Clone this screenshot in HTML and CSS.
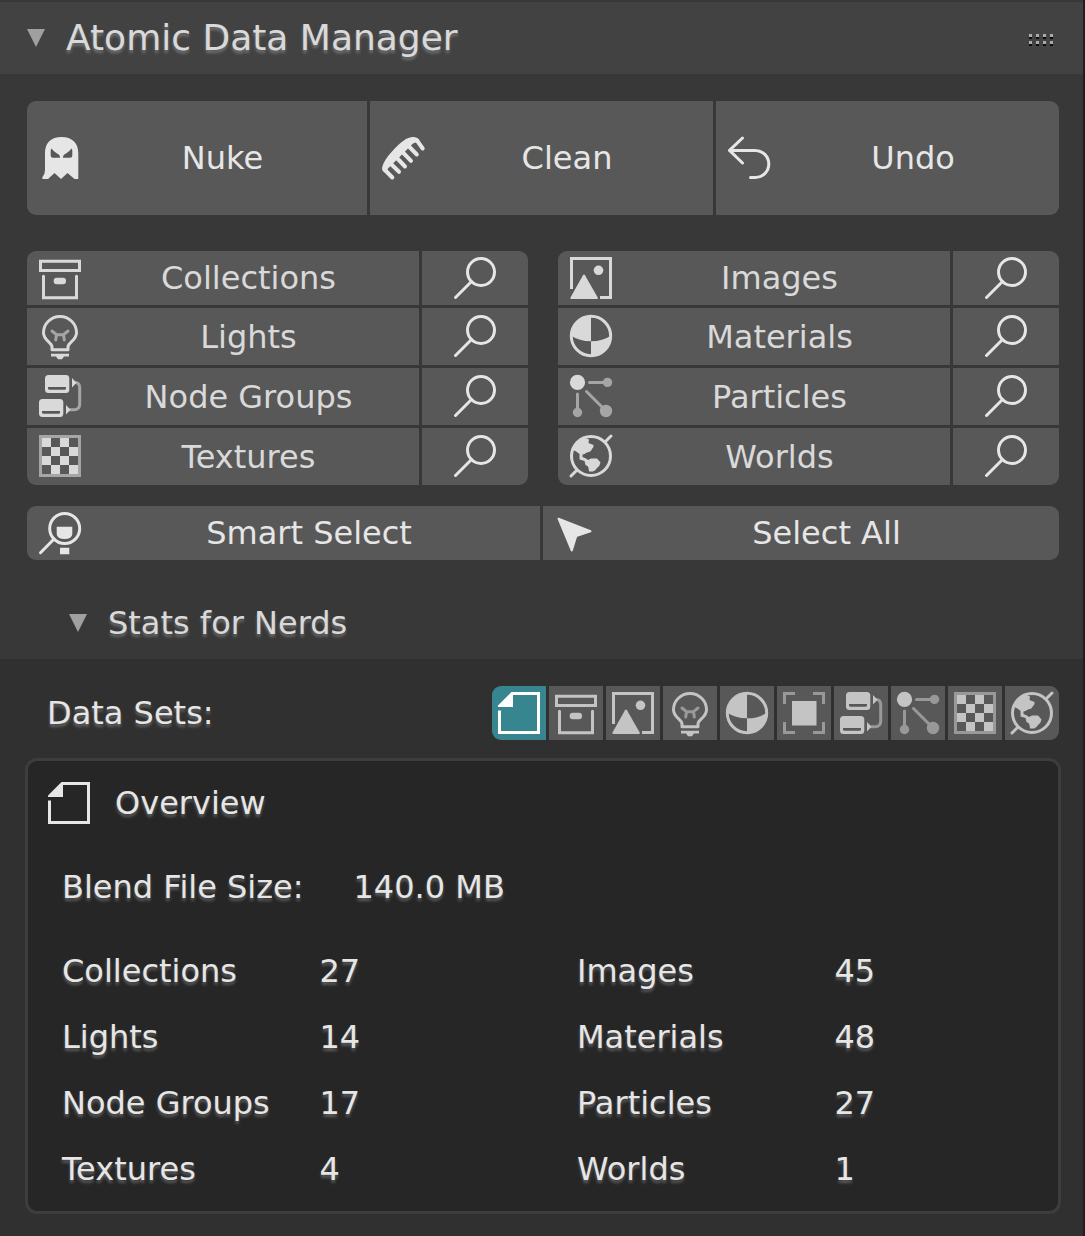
FILE: index.html
```html
<!DOCTYPE html>
<html lang="en">
<head>
<meta charset="utf-8">
<title>Atomic Data Manager</title>
<link rel="stylesheet" href="styles.css">
</head>
<body>
<svg class="sprite" aria-hidden="true">
  <symbol id="ghost" viewBox="0 0 44 44"><path fill="currentColor" fill-rule="evenodd" d="M7 17C7 7 13 1 23.500 1S40.300 7 40.300 17V43H36.500L29.500 37L23 43L16.500 37L10 43H4.500Q4 42 4.500 41Q7 38 7 34ZM13.500 12.500Q12.700 13 12.700 15V19.500Q12.700 21.700 15 21.700H22Q22 18.500 19 17.500Q15.500 15.500 13.500 12.500ZM33.500 12.500Q31.500 15.500 28 17.500Q25 18.500 25 21.700H32Q34.300 21.700 34.300 19.500V15Q34.300 13 33.500 12.500Z"/></symbol>
  <symbol id="comb" viewBox="0 0 44 44"><path fill="currentColor" d="M1.200 31C2.500 26 6 21 11 15.500C17 9 23 2.500 30 1.200C34 .5 36.500 1.500 38.500 4L36 6L32 7.500L7 32.500L5 37C2 36 .700 34 1.200 31Z"/><path class="line tooth" d="M3.500 33.500L11.300 41.500M9 27L18 35.800M15 21L24 30.500M21 15.500L30 24.800M27.500 10L35.800 18.500M36 4.500L41.700 12.500"/></symbol>
  <symbol id="undo" viewBox="0 0 44 44"><path class="line" d="M15.500 2L2.500 14.400L15.500 27M2.500 14.400H28.200A13.600 13.600 0 0 1 28.200 41.600H23.500"/></symbol>
  <symbol id="collection" viewBox="0 0 44 44"><path class="line square" d="M2.500 5.200H41.500V14.500H2.500ZM5.500 20.200V41.700H38.500V20.200"/><rect fill="currentColor" x="15.700" y="21.700" width="12.300" height="6.600" rx="3"/></symbol>
  <symbol id="light" viewBox="0 0 44 44"><path class="line" d="M14 35.700V32.500C13 28 5.500 26 5.500 18.700A16.500 16.200 0 0 1 38.500 18.700C38.500 26 31 28 30 32.500V35.700Z"/><path fill="currentColor" d="M13 39.700H31V42.500H26L24 45.300H20L18 42.500H13Z"/><path class="thin" d="M14 17L18.500 20.700H25.500L30 17M18.500 20.700L17.700 26M25.500 20.700L26.300 26"/></symbol>
  <symbol id="nodes" viewBox="0 0 44 44"><path fill="currentColor" fill-rule="evenodd" d="M10.500 1H28Q31.300 1 31.300 4.500V15.500Q31.300 19 28 19H10.500Q7 19 7 15.500V4.500Q7 1 10.500 1ZM10 13V14.500Q10 15.700 11.500 15.700H26.500Q28 15.700 28 14.500V13ZM4.500 25H22Q25.300 25 25.300 28.500V39.500Q25.300 43 22 43H4.500Q1 43 1 39.500V28.500Q1 25 4.500 25ZM4 37V38.500Q4 39.700 5.500 39.700H20.500Q22 39.700 22 38.500V37ZM34 4L38.500 8.700L34 13.500ZM28 31L32.500 35.700L28 40.500Z"/><path class="thin" d="M37 8.500Q41.700 8.500 41.700 14V30Q41.700 35.700 36 35.700H32"/></symbol>
  <symbol id="texture" viewBox="0 0 44 44"><rect class="dim" x="2.500" y="2.500" width="39" height="39"/><path fill="currentColor" d="M4 4h9v9H4zM22 4h9v9h-9zM13 13h9v9h-9zM31 13h9v9h-9zM4 22h9v9H4zM22 22h9v9h-9zM13 31h9v9h-9zM31 31h9v9h-9z"/></symbol>
  <symbol id="image" viewBox="0 0 44 44"><path class="line square flat" d="M2.500 33V2.500H41.500V41.500H31"/><path fill="currentColor" d="M14 19.300Q15 17.700 16 19.300L28.700 41.500Q29 43 28 43H2.500Q1 43 1.500 41.500Z"/><circle fill="currentColor" cx="29.500" cy="14.300" r="4.800"/></symbol>
  <symbol id="material" viewBox="0 0 44 44"><circle class="line" cx="22" cy="22" r="19.700"/><path fill="currentColor" d="M22 2A20 20 0 0 0 2 21.500Q10 27.300 22 27.300ZM22 27.300Q34 27.300 42 21.500A20 20 0 0 1 22 42Z"/></symbol>
  <symbol id="particles" viewBox="0 0 44 44"><circle fill="currentColor" cx="8.500" cy="8.400" r="7.600"/><g class="faded"><path class="line" d="M20.500 8.400H36M8.500 20V36M17.500 17.500L35 35"/><circle fill="currentColor" cx="38.500" cy="8.400" r="4.700"/><circle fill="currentColor" cx="8.500" cy="38.500" r="4.700"/><circle fill="currentColor" cx="37" cy="37" r="6.200"/></g></symbol>
  <symbol id="world" viewBox="0 0 44 44"><circle class="line" cx="22" cy="22" r="19.500"/><path class="line" d="M36.500 7.500L42 2M2 42L7.500 36.500"/><path fill="currentColor" d="M4 15Q7 6 14.500 3L20 5.500L19.500 9L24.500 11Q25 13.500 23 15Q22 18 18 18.500L15.500 20L13.500 20.500L13.500 23L17 24.500L19 26L22 24.500H28L31.500 28.500Q31 32 28 34Q26.500 37 24 37.500H20L19.500 34Q19.500 32 16.500 31L15.500 27L10.500 25.500V20Q7 17 4 16Z"/></symbol>
  <symbol id="search" viewBox="0 0 44 44"><circle class="line" cx="28" cy="16" r="13.500"/><path class="line" d="M18.500 25.500L2.500 41.500"/></symbol>
  <symbol id="smart" viewBox="0 0 44 44"><circle class="line" cx="26.700" cy="17.500" r="15"/><path class="line" d="M16 28L2.500 41.700"/><path fill="currentColor" d="M18.700 15.700H34.300V23Q34 28 26.500 28T18.700 23ZM22 36.700H31.300V43.300H22Z"/></symbol>
  <symbol id="cursor" viewBox="0 0 44 44"><path class="solid" d="M4.500 7.700L36.500 20.300L22.300 25L17.800 39.500Z"/></symbol>
  <symbol id="file" viewBox="0 0 44 44"><path class="line square flat" d="M2.500 19.500V41.500H41.500V2.500H15"/><path fill="currentColor" d="M1 16V14.500L14.500 1H16V16Z"/></symbol>
  <symbol id="object" viewBox="0 0 44 44"><rect fill="currentColor" x="10" y="10" width="24.500" height="24.500"/><path class="dim" d="M2.500 13V2.500H13M31 2.500H41.500V13M41.500 31V41.500H31M13 41.500H2.500V31"/></symbol>
</svg>

<main class="panel">
  <header class="panel-header">
    <button class="toggle title" type="button" aria-expanded="true"><span class="arrow"></span>Atomic Data Manager</button>
    <svg class="grip" viewBox="0 0 24 12" aria-hidden="true"><path fill="#aaa" d="M0 0h3v3H0zM7 0h3v3H7zM14 0h3v3h-3zM21 0h3v3h-3zM0 7h3v3H0zM7 7h3v3H7zM14 7h3v3h-3zM21 7h3v3h-3z"/><path fill="#0c0c0c" d="M0 3h3v2H0zM7 3h3v2H7zM14 3h3v2h-3zM21 3h3v2h-3zM0 10h3v2H0zM7 10h3v2H7zM14 10h3v2h-3zM21 10h3v2h-3z"/></svg>
  </header>

  <div class="panel-body">
    <div class="group actions">
      <button class="btn" type="button"><svg class="icon"><use href="#ghost"/></svg><span>Nuke</span></button>
      <button class="btn" type="button"><svg class="icon"><use href="#comb"/></svg><span>Clean</span></button>
      <button class="btn" type="button"><svg class="icon"><use href="#undo"/></svg><span>Undo</span></button>
    </div>

    <div class="categories">
      <div class="group list">
        <button class="btn soft" type="button"><svg class="icon"><use href="#collection"/></svg><span>Collections</span></button>
        <button class="btn inspect" type="button" aria-label="Inspect collections"><svg class="icon"><use href="#search"/></svg></button>
        <button class="btn soft" type="button"><svg class="icon"><use href="#light"/></svg><span>Lights</span></button>
        <button class="btn inspect" type="button" aria-label="Inspect lights"><svg class="icon"><use href="#search"/></svg></button>
        <button class="btn soft" type="button"><svg class="icon"><use href="#nodes"/></svg><span>Node Groups</span></button>
        <button class="btn inspect" type="button" aria-label="Inspect node groups"><svg class="icon"><use href="#search"/></svg></button>
        <button class="btn soft" type="button"><svg class="icon"><use href="#texture"/></svg><span>Textures</span></button>
        <button class="btn inspect" type="button" aria-label="Inspect textures"><svg class="icon"><use href="#search"/></svg></button>
      </div>
      <div class="group list">
        <button class="btn soft" type="button"><svg class="icon"><use href="#image"/></svg><span>Images</span></button>
        <button class="btn inspect" type="button" aria-label="Inspect images"><svg class="icon"><use href="#search"/></svg></button>
        <button class="btn soft" type="button"><svg class="icon"><use href="#material"/></svg><span>Materials</span></button>
        <button class="btn inspect" type="button" aria-label="Inspect materials"><svg class="icon"><use href="#search"/></svg></button>
        <button class="btn soft" type="button"><svg class="icon"><use href="#particles"/></svg><span>Particles</span></button>
        <button class="btn inspect" type="button" aria-label="Inspect particles"><svg class="icon"><use href="#search"/></svg></button>
        <button class="btn soft" type="button"><svg class="icon"><use href="#world"/></svg><span>Worlds</span></button>
        <button class="btn inspect" type="button" aria-label="Inspect worlds"><svg class="icon"><use href="#search"/></svg></button>
      </div>
    </div>

    <div class="group select">
      <button class="btn" type="button"><svg class="icon"><use href="#smart"/></svg><span>Smart Select</span></button>
      <button class="btn" type="button"><svg class="icon"><use href="#cursor"/></svg><span>Select All</span></button>
    </div>
  </div>

  <section class="stats">
    <button class="toggle subtitle" type="button" aria-expanded="true"><span class="arrow"></span>Stats for Nerds</button>

    <div class="stats-body">
      <div class="datasets" role="radiogroup" aria-labelledby="datasets-label">
        <span class="label" id="datasets-label">Data Sets:</span>
        <div class="group tabs">
          <label class="tab"><input type="radio" name="set" aria-label="Overview" checked><svg class="icon"><use href="#file"/></svg></label>
          <label class="tab"><input type="radio" name="set" aria-label="Collections"><svg class="icon"><use href="#collection"/></svg></label>
          <label class="tab"><input type="radio" name="set" aria-label="Images"><svg class="icon"><use href="#image"/></svg></label>
          <label class="tab"><input type="radio" name="set" aria-label="Lights"><svg class="icon"><use href="#light"/></svg></label>
          <label class="tab"><input type="radio" name="set" aria-label="Materials"><svg class="icon"><use href="#material"/></svg></label>
          <label class="tab"><input type="radio" name="set" aria-label="Objects"><svg class="icon"><use href="#object"/></svg></label>
          <label class="tab"><input type="radio" name="set" aria-label="Node Groups"><svg class="icon"><use href="#nodes"/></svg></label>
          <label class="tab"><input type="radio" name="set" aria-label="Particles"><svg class="icon"><use href="#particles"/></svg></label>
          <label class="tab"><input type="radio" name="set" aria-label="Textures"><svg class="icon"><use href="#texture"/></svg></label>
          <label class="tab"><input type="radio" name="set" aria-label="Worlds"><svg class="icon"><use href="#world"/></svg></label>
        </div>
      </div>

      <div class="box">
        <h2 class="box-title"><svg class="icon"><use href="#file"/></svg>Overview</h2>
        <dl class="filesize"><dt>Blend File Size:</dt><dd>140.0 MB</dd></dl>
        <dl class="counts">
          <dt>Collections</dt><dd>27</dd><dt>Images</dt><dd>45</dd>
          <dt>Lights</dt><dd>14</dd><dt>Materials</dt><dd>48</dd>
          <dt>Node Groups</dt><dd>17</dd><dt>Particles</dt><dd>27</dd>
          <dt>Textures</dt><dd>4</dd><dt>Worlds</dt><dd>1</dd>
        </dl>
      </div>
    </div>
  </section>
</main>
</body>
</html>
```

FILE: styles.css
```css
* {
  box-sizing: border-box;
}

body {
  margin: 0;
  background: #303030;
  color: #e6e6e6;
  font: 32px/66px "DejaVu Sans", sans-serif;
}

.sprite {
  position: absolute;
  width: 0;
  height: 0;
}

.panel {
  min-height: 100vh;
  padding-top: 2px;
  background: #383838;
  border-right: 2px solid #1f1f1f;
  display: flex;
  flex-direction: column;
}

/* Headers */
.panel-header {
  display: flex;
  align-items: center;
  justify-content: space-between;
  height: 72px;
  padding-right: 30px;
  background: #424242;
}

.toggle {
  display: flex;
  align-items: center;
  gap: 21px;
  height: 72px;
  padding: 0 0 0 27px;
  border: 0;
  background: none;
  color: #d9d9d9;
  font: inherit;
  text-shadow: 0 3px 3px rgba(255, 255, 255, 0.25);
}

.title {
  font-size: 36px;
}

.subtitle {
  padding-left: 69px;
}

.arrow {
  width: 18px;
  height: 18px;
  background: #a0a0a0;
  clip-path: polygon(0 0, 100% 0, 50% 100%);
}

.grip {
  width: 24px;
  height: 12px;
  margin-top: 4px;
}

/* Icons */
.icon {
  flex: none;
  width: 44px;
  height: 44px;
  overflow: visible;
}

symbol {
  overflow: visible;
}

.line,
.thin,
.dim {
  fill: none;
  stroke: currentColor;
  stroke-width: 3px;
  stroke-linecap: round;
  stroke-linejoin: round;
}

.square {
  stroke-linejoin: miter;
}

.flat,
.dim {
  stroke-linecap: butt;
  stroke-linejoin: miter;
}

.thin,
.dim,
.faded {
  opacity: 0.6;
}

.tooth {
  stroke-width: 4px;
}

.solid {
  fill: currentColor;
  stroke: currentColor;
  stroke-width: 2px;
  stroke-linejoin: round;
}

/* Buttons */
.panel-body {
  padding: 27px 24px 27px 27px;
}

.group {
  display: grid;
  gap: 3px;
  overflow: hidden;
  border-radius: 9px;
}

.btn {
  display: flex;
  align-items: center;
  padding: 0 4px 0 11px;
  border: 0;
  background: #585858;
  color: #e6e6e6;
  font: inherit;
  line-height: 48px;
}

.btn span {
  flex: 1;
  text-align: center;
}

.soft {
  color: #d9d9d9;
}

.actions {
  grid-template-columns: 340fr 343fr 343fr;
  grid-template-rows: 114px;
}

.categories {
  display: grid;
  grid-template-columns: 1fr 1fr;
  gap: 30px;
  margin: 36px 0 21px;
}

.list {
  grid-template-columns: 1fr 106px;
  grid-template-rows: 54px 57px 57px 57px;
}

.list .icon {
  margin-bottom: 1px;
}

.inspect {
  justify-content: center;
  padding: 0;
}

.select {
  grid-template-columns: 513fr 516fr;
  grid-template-rows: 54px;
}

/* Stats */
.stats {
  flex: 1;
  display: flex;
  flex-direction: column;
}

.stats-body {
  flex: 1;
  padding: 27px 22px 23px 25px;
  background: #303030;
}

.datasets {
  display: flex;
  align-items: center;
  justify-content: space-between;
  height: 54px;
  margin-bottom: 18px;
  padding: 0 2px 0 22px;
}

.label,
.box {
  text-shadow: 0 3px 3px rgba(255, 255, 255, 0.25);
}

.tabs {
  grid-template-columns: repeat(10, 54px);
}

.tab {
  position: relative;
  display: flex;
  align-items: center;
  justify-content: center;
  height: 54px;
  background: #585858;
  color: #c4c4c4;
}

.tab input {
  position: absolute;
  inset: 0;
  width: 100%;
  height: 100%;
  margin: 0;
  opacity: 0;
}

.tab:has(:checked) {
  background: #37868f;
  color: #fff;
}

.box {
  padding: 9px 0;
  border: 3px solid #3d3d3d;
  border-radius: 12px;
  background: #262626;
}

.box-title {
  display: flex;
  align-items: center;
  gap: 24px;
  margin: 0;
  padding-left: 19px;
  font: inherit;
}

.filesize {
  display: flex;
  gap: 50px;
  margin: 18px 0;
  padding-left: 34px;
}

.counts {
  display: grid;
  grid-template-columns: repeat(4, 1fr);
  margin: 0;
}

.counts dt,
.counts dd {
  padding-left: 34px;
  white-space: nowrap;
}

dd {
  margin: 0;
}
```
